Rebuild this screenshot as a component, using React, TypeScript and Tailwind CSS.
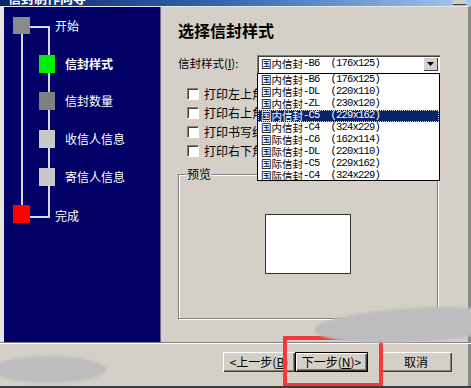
import React from 'react';

// envelope presets shown in the open dropdown
const envelopes: [string, string, string][] = [
  ['国内信封', 'B6', '176x125'],
  ['国内信封', 'DL', '220x110'],
  ['国内信封', 'ZL', '230x120'],
  ['国内信封', 'C5', '229x162'],
  ['国内信封', 'C4', '324x229'],
  ['国际信封', 'C6', '162x114'],
  ['国际信封', 'DL', '220x110'],
  ['国际信封', 'C5', '229x162'],
  ['国际信封', 'C4', '324x229'],
];

const options = ['打印左上角邮政编码框', '打印右上角贴邮票框', '打印书写线', '打印右下角邮政编码'];

function EnvelopeText({ name, code, size }: { name: string; code: string; size: string }) {
  return (
    <span className="flex items-center whitespace-pre">
      <span className="text-[10.5px]">{name}</span>
      <span className="font-['Liberation_Mono',monospace] text-[10.5px] tracking-[-0.8px]">{`-${code}  (${size})`}</span>
    </span>
  );
}

function Checkbox({ label }: { label: string }) {
  return (
    <div className="flex items-center gap-[5px] h-[13px]">
      <span className="w-[12px] h-[12px] bg-white border border-t-[#808080] border-l-[#808080] border-r-white border-b-white shadow-[inset_1px_1px_0_#404040]" />
      <span className="leading-[13px] whitespace-nowrap">{label}</span>
    </div>
  );
}

function Step({ top, color, label, bold }: { top: number; color: string; label: string; bold?: boolean }) {
  return (
    <>
      <div className={`absolute left-[35px] w-[16px] h-[18px] ${color}`} style={{ top }} />
      <div
        className={`absolute left-[61px] text-white text-[12px] leading-[14px] ${bold ? 'font-bold' : ''}`}
        style={{ top: top + 2 }}
      >
        {label}
      </div>
    </>
  );
}

function WinButton({ children, primary }: { children: React.ReactNode; primary?: boolean }) {
  return (
    <button
      className={
        primary
          ? 'h-[20px] w-[73px] bg-[#d4d0c8] border border-black shadow-[inset_1px_1px_0_#fff,inset_-1px_-1px_0_#404040,inset_-2px_-2px_0_#808080] text-[12px] leading-none'
          : 'h-[20px] w-[72px] bg-[#d4d0c8] shadow-[inset_1px_1px_0_#fff,inset_-1px_-1px_0_#404040,inset_-2px_-2px_0_#808080] text-[12px] leading-none'
      }
    >
      {children}
    </button>
  );
}

export default function App() {
  return (
    <div className="relative w-[471px] h-[388px] overflow-hidden bg-[#d4d0c8] font-['Noto_Sans_CJK_SC',sans-serif] text-[12px] text-black flex flex-col border-b-[2px] border-b-[#3a3a3a]">
      {/* Title bar (cut off at the top) */}
      <div className="h-[6px] shrink-0 overflow-hidden flex bg-gradient-to-r from-[#0a246a] via-[#3a6ab4] to-[#a6caf0]">
        <span className="ml-[8px] -mt-[9px] leading-[14px] text-[13px] font-bold text-white">信封制作向导</span>
        <span className="ml-auto mr-[5px] w-[13px] h-[5px] bg-[#d4d0c8] border-b border-[#404040]" />
      </div>

      {/* Body */}
      <div className="h-[336px] shrink-0 flex border-t border-[#e8e6e0] border-l-[4px] border-l-[#e6e4de] border-r-[3px] border-r-[#8a8a8a]">
        {/* Navy step panel */}
        <div className="relative w-[157px] h-full bg-[#000066] border-r border-[#6a6a8a]">
          <svg className="absolute inset-0" width="157" height="335">
            <g stroke="#d8d8d8" strokeWidth="2" fill="none">
              <path d="M26 20 H45 V210 H26" />
              <path d="M18 27 V198" />
            </g>
          </svg>
          <div className="absolute left-[9px] top-[10px] w-[17px] h-[17px] bg-[#8a8a8a]" />
          <div className="absolute left-[51px] top-[12px] text-white leading-[14px]">开始</div>
          <Step top={48} color="bg-[#00ee00]" label="信封样式" bold />
          <Step top={85} color="bg-[#808080]" label="信封数量" />
          <Step top={123} color="bg-[#c8c8c8]" label="收信人信息" />
          <Step top={161} color="bg-[#c8c8c8]" label="寄信人信息" />
          <div className="absolute left-[9px] top-[198px] w-[17px] h-[18px] bg-[#ff0000]" />
          <div className="absolute left-[51px] top-[202px] text-white leading-[14px]">完成</div>
        </div>

        {/* Right page */}
        <div className="flex-1 flex flex-col pl-[17px] pr-[28px] pt-[13px]">
          <h1 className="text-[16px] font-bold leading-[20px]">选择信封样式</h1>

          <div className="mt-[15px] flex items-center h-[18px]">
            <span className="w-[79px] text-[11.5px]">
              信封样式(<span className="underline">I</span>):
            </span>
            <div className="relative w-[183px] h-[18px] bg-white shadow-[inset_1px_1px_0_#808080,inset_2px_2px_0_#404040,inset_-1px_-1px_0_#fff] flex items-center pl-[4px]">
              <EnvelopeText name="国内信封" code="B6" size="176x125" />
              <span className="ml-auto mr-[2px] w-[15px] h-[14px] bg-[#d4d0c8] shadow-[inset_1px_1px_0_#fff,inset_-1px_-1px_0_#404040] flex items-center justify-center">
                <svg width="7" height="4" viewBox="0 0 7 4">
                  <path d="M0 0 H7 L3.5 4 Z" fill="#000" />
                </svg>
              </span>

              {/* Open list */}
              <div className="absolute z-10 left-0 top-[18px] w-[183px] h-[108px] bg-white border border-black">
                {envelopes.map(([n, c, s], i) => (
                  <div
                    key={i}
                    className={
                      i === 3
                        ? 'h-[12px] pl-[3px] flex items-center bg-[#0a246a] text-white outline-1 outline-dotted outline-[#d0d0d0] -outline-offset-1'
                        : 'h-[12px] pl-[3px] flex items-center'
                    }
                  >
                    <EnvelopeText name={n} code={c} size={s} />
                  </div>
                ))}
              </div>
            </div>
          </div>

          <div className="mt-[14px] pl-[9px] flex flex-col gap-[6px] overflow-hidden">
            {options.map((o) => (
              <Checkbox key={o} label={o} />
            ))}
          </div>

          {/* Preview group box */}
          <div className="relative mt-[17px] w-[260px] h-[145px] border border-[#808080] shadow-[inset_1px_1px_0_#fff,1px_1px_0_#fff] flex items-center justify-center pb-[6px]">
            <span className="absolute -top-[8px] left-[7px] px-[1px] bg-[#d4d0c8] leading-[14px]">预览</span>
            <div className="w-[86px] h-[60px] bg-white border-[1.5px] border-[#333]" />
          </div>
        </div>
      </div>

      {/* Etched separator */}
      <div className="h-[2px] shrink-0 border-t border-[#808080] border-b border-b-white" />

      {/* Footer buttons */}
      <div className="flex-1 flex justify-end items-start pt-[8px] pr-[16px] border-r-[3px] border-r-[#8a8a8a]">
        <WinButton>&lt;上一步(<span className="underline">B</span>)</WinButton>
        <WinButton primary>
          下一步(<span className="underline">N</span>)&gt;
        </WinButton>
        <span className="w-[12px]" />
        <WinButton>取消</WinButton>
      </div>

      {/* Overlays: highlight, smudges, mouse pointer */}
      <div className="absolute left-[283px] top-[336px] w-[100px] h-[51px] border-[4px] border-[#f23a3a]" />
      <div className="absolute -left-[8px] top-[356px] w-[114px] h-[27px] rounded-[50%] bg-[#bdbdbd] blur-[1px]" />
      <div className="absolute left-[314px] top-[308px] w-[200px] h-[34px] rounded-[50%] bg-[#bdbdbd] blur-[1px] -rotate-3" />
      <svg className="absolute left-[400px] top-[116px]" width="12" height="19" viewBox="0 0 12 19">
        <path d="M0.5 0.5 V15.5 L4 12 L6.5 18 L8.5 17 L6 11 H11 Z" fill="#fff" stroke="#000" strokeWidth="1" />
      </svg>
    </div>
  );
}
